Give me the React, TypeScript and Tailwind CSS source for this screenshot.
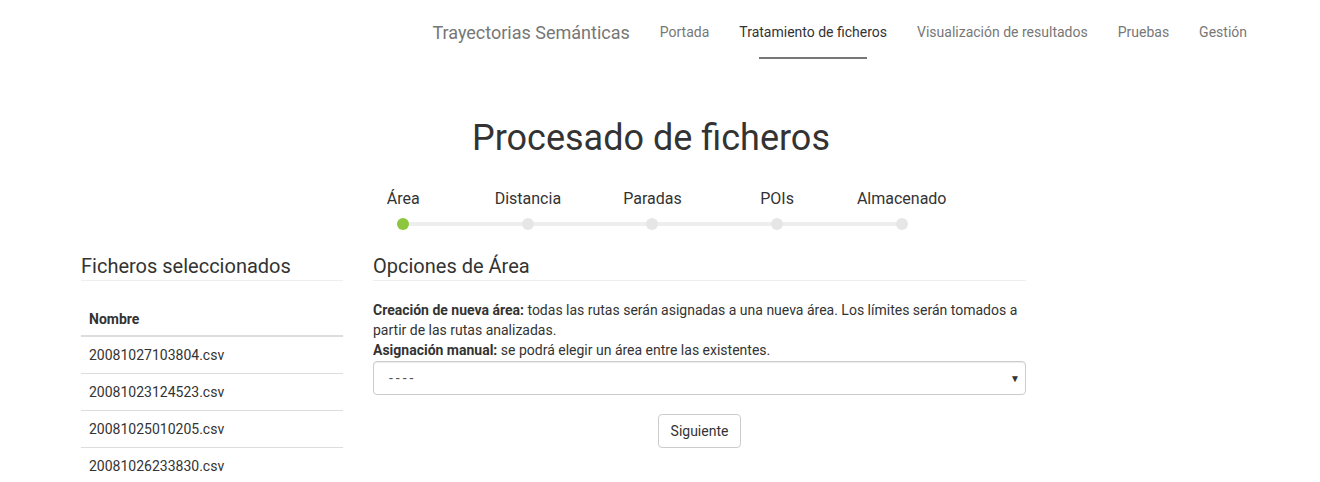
const links = [
  { label: 'Portada', active: false },
  { label: 'Tratamiento de ficheros', active: true },
  { label: 'Visualización de resultados', active: false },
  { label: 'Pruebas', active: false },
  { label: 'Gestión', active: false },
]

const steps = ['Área', 'Distancia', 'Paradas', 'POIs', 'Almacenado']

const files = ['20081027103804.csv', '20081023124523.csv', '20081025010205.csv', '20081026233830.csv']

function Navbar() {
  return (
    <div className="flex h-[62px] items-start justify-end pt-[1px] pr-[40px]">
      <div className="flex h-[62px] items-center px-[15px] text-[18px] text-[#777]">Trayectorias Semánticas</div>
      {links.map((l) => (
        <div key={l.label} className="relative flex h-[62px] items-center px-[15px] text-[14px]">
          <span className={l.active ? 'text-[#333]' : 'text-[#777]'}>{l.label}</span>
          {l.active && <div className="absolute left-[35px] right-[35px] top-[56px] h-[2px] bg-[#777]" />}
        </div>
      ))}
    </div>
  )
}

function Stepper() {
  return (
    <div className="mx-auto mt-[30px] w-[626px] pl-[3px]">
      <div className="grid grid-cols-5">
        {steps.map((s) => (
          <div key={s} className="text-center text-[16px] leading-[22px] text-[#333]">
            {s}
          </div>
        ))}
      </div>
      <div className="relative mt-[8px] h-[12px]">
        <div className="absolute left-[62px] right-[62px] top-[4px] h-[4px] bg-[#eee]" />
        <div className="relative grid grid-cols-5">
          {steps.map((s, i) => (
            <div key={s} className="flex justify-center">
              <div className={`h-[12px] w-[12px] rounded-full ${i === 0 ? 'bg-[#8cc63f]' : 'bg-[#e6e6e6]'}`} />
            </div>
          ))}
        </div>
      </div>
    </div>
  )
}

function SectionTitle({ children }: { children: string }) {
  return (
    <div className="border-b border-[#eee] pb-[3px] text-[20px] leading-[22px] text-[#333]">{children}</div>
  )
}

export default function App() {
  return (
    <div className="h-[482px] w-[1302px] bg-white font-['Roboto',sans-serif] text-[14px] text-[#333]">
      <Navbar />
      <div className="mx-auto w-[1170px] px-[15px]">
        <h1 className="mt-[56px] text-center text-[36px] leading-[40px] text-[#333]">Procesado de ficheros</h1>
        <Stepper />
        <div className="mt-[25px] flex gap-[30px]">
          <div className="w-[262px]">
            <SectionTitle>Ficheros seleccionados</SectionTitle>
            <div className="mt-[20px]">
              <div className="border-b-2 border-[#ddd] px-[8px] pt-[8px] pb-[6px] font-bold leading-[20px]">Nombre</div>
              {files.map((f) => (
                <div key={f} className="border-b border-[#ddd] px-[8px] pt-[8px] pb-[8px] leading-[20px]">
                  {f}
                </div>
              ))}
            </div>
          </div>
          <div className="w-[653px]">
            <SectionTitle>Opciones de Área</SectionTitle>
            <p className="mt-[19px] leading-[20px]">
              <b>Creación de nueva área:</b> todas las rutas serán asignadas a una nueva área. Los límites serán tomados a
              partir de las rutas analizadas.
              <br />
              <b>Asignación manual:</b> se podrá elegir un área entre las existentes.
            </p>
            <div className="mt-[1px] flex h-[34px] items-center justify-between rounded-[4px] border border-[#ccc] pl-[15px] pr-[5px] text-[#555] shadow-[inset_0_1px_1px_rgba(0,0,0,0.075)]">
              <span className="tracking-[3px]">----</span>
              <span className="text-[10px] text-[#333]">▼</span>
            </div>
            <div className="mt-[19px] flex justify-center">
              <button className="h-[34px] rounded-[4px] border border-[#ccc] bg-white px-[12px] text-[14px] text-[#333]">
                Siguiente
              </button>
            </div>
          </div>
        </div>
      </div>
    </div>
  )
}
